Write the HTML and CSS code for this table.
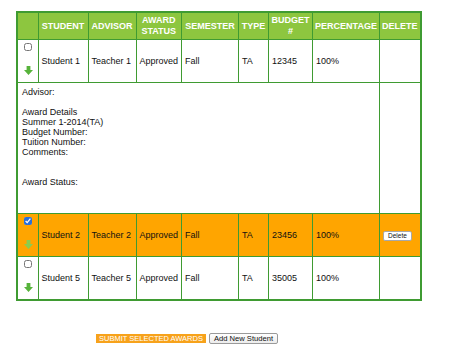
FILE: index.html
```html
<!DOCTYPE html>
<html>
<head>
<meta charset="utf-8">
<link rel="stylesheet" href="styles.css">
</head>
<body>
<div class="page">
  <table class="awards">
    <colgroup>
      <col class="c-sel"><col class="c-student"><col class="c-advisor"><col class="c-status"><col class="c-sem"><col class="c-type"><col class="c-budget"><col class="c-pct"><col class="c-del">
    </colgroup>
    <thead>
      <tr>
        <th></th><th>Student</th><th>Advisor</th><th>Award Status</th><th>Semester</th><th>Type</th><th>Budget #</th><th>Percentage</th><th>Delete</th>
      </tr>
    </thead>
    <tbody>
      <tr class="row">
        <td class="sel"><div class="sel-box"><input type="checkbox" class="chk"><svg class="arrow" viewBox="0 0 9 9"><path d="M2.6 0h3.8v4H9L4.5 9 0 4h2.6z"/></svg></div></td>
        <td>Student 1</td><td>Teacher 1</td><td>Approved</td><td>Fall</td><td>TA</td><td>12345</td><td>100%</td><td></td>
      </tr>
      <tr class="details">
        <td colspan="8">Advisor:<br><br>Award Details<br>Summer 1-2014(TA)<br>Budget Number:<br>Tuition Number:<br>Comments:<br><br><br>Award Status:</td>
        <td></td>
      </tr>
      <tr class="row selected">
        <td class="sel"><div class="sel-box"><input type="checkbox" class="chk" checked><svg class="arrow" viewBox="0 0 9 9"><path d="M2.6 0h3.8v4H9L4.5 9 0 4h2.6z"/></svg></div></td>
        <td>Student 2</td><td>Teacher 2</td><td>Approved</td><td>Fall</td><td>TA</td><td>23456</td><td>100%</td><td><button class="delete">Delete</button></td>
      </tr>
      <tr class="row">
        <td class="sel"><div class="sel-box"><input type="checkbox" class="chk"><svg class="arrow" viewBox="0 0 9 9"><path d="M2.6 0h3.8v4H9L4.5 9 0 4h2.6z"/></svg></div></td>
        <td>Student 5</td><td>Teacher 5</td><td>Approved</td><td>Fall</td><td>TA</td><td>35005</td><td>100%</td><td></td>
      </tr>
    </tbody>
  </table>
  <div class="actions">
    <button class="submit">Submit Selected Awards</button>
    <button class="add">Add New Student</button>
  </div>
</div>
</body>
</html>
```
FILE: styles.css
```css
html, body {
  margin: 0;
  padding: 0;
  background: #fff;
}
body {
  font-family: "Liberation Sans", Arial, Helvetica, sans-serif;
  color: #111;
}
.page {
  padding: 11px 0 0 16px;
}
.awards {
  border-collapse: collapse;
  table-layout: fixed;
  border: 2px solid #3f9b32;
  font-size: 9px;
}
.c-sel { width: 21px; }
.c-student { width: 50px; }
.c-advisor { width: 48px; }
.c-status { width: 45px; }
.c-sem { width: 57px; }
.c-type { width: 30px; }
.c-budget { width: 44px; }
.c-pct { width: 67px; }
.c-del { width: 41px; }
.awards th, .awards td {
  border: 1px solid #3f9b32;
}
.awards th {
  background: #8dc63f;
  color: #fff;
  font-weight: bold;
  text-transform: uppercase;
  text-align: center;
  line-height: 11px;
  padding: 2px 2px;
  height: 22px;
}
.awards td {
  padding: 0 3px;
  line-height: 11px;
  vertical-align: middle;
  text-align: left;
}
.row td {
  height: 42px;
}
.selected td {
  background: #ffa500;
}
.awards td.sel {
  padding: 0;
}
.sel-box {
  height: 42px;
  box-sizing: border-box;
  padding: 3px 0 7px 6px;
  display: flex;
  flex-direction: column;
  justify-content: space-between;
  align-items: flex-start;
}
.chk {
  width: 8px;
  height: 8px;
  margin: 0;
  accent-color: #2b6fd8;
}
.arrow {
  width: 9px;
  height: 9px;
  fill: #57b33b;
}
.selected .arrow {
  fill: #8ccc4e;
}
.details td {
  vertical-align: top;
  height: 122px;
  padding: 4px 4px;
  line-height: 10px;
}
.delete {
  font-family: "Liberation Sans", Arial, sans-serif;
  font-size: 6.5px;
  line-height: 8px;
  padding: 0 4px;
  margin: 0;
  background: #fff;
  border: 1px solid #a8a8a8;
  border-radius: 2px;
  color: #111;
}
.actions {
  display: flex;
  align-items: center;
  gap: 3px;
  margin: 32px 0 0 80px;
}
.submit {
  font-family: "Liberation Sans", Arial, sans-serif;
  font-size: 7.5px;
  line-height: 9px;
  padding: 0 3px;
  margin: 0;
  border: none;
  background: #f7a21b;
  color: #fff;
  text-transform: uppercase;
}
.add {
  font-family: "Liberation Sans", Arial, sans-serif;
  font-size: 7.6px;
  line-height: 9px;
  padding: 0 4px;
  margin: 0;
  background: linear-gradient(#fff, #ececec);
  border: 1px solid #9a9a9a;
  border-radius: 2px;
  color: #111;
}
```
